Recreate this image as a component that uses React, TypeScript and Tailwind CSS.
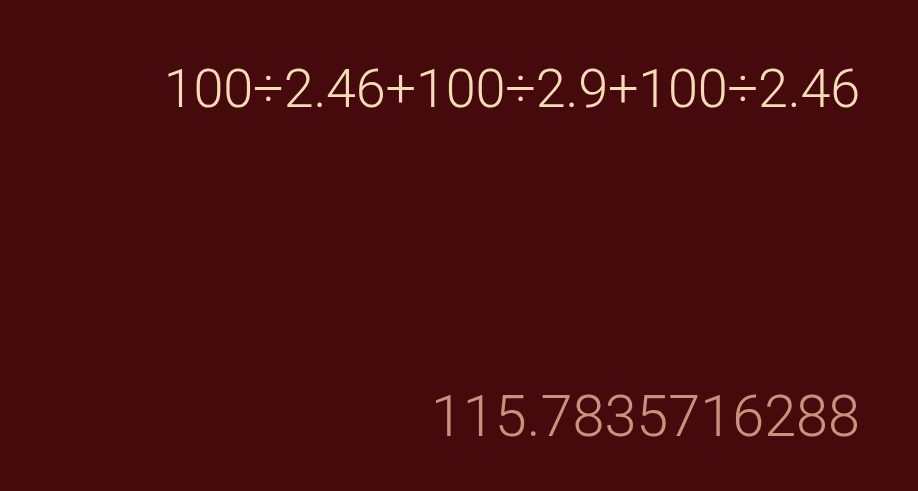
const App = () => {
  return (
    <div
      className="flex h-[491px] w-[918px] flex-col items-end bg-[#470a0c] pr-[58px]"
      style={{ fontFamily: "Roboto, 'Noto Sans', sans-serif" }}
    >
      <div className="mt-[53px] text-[54px] leading-[72px] font-light tracking-[-0.2px] text-[#f6dcb6]">
        100÷2.46+100÷2.9+100÷2.46
      </div>
      <div className="mt-auto mb-[38px] text-[57.6px] leading-[72px] font-light text-[#c9927c]">
        115.7835716288
      </div>
    </div>
  )
}

export default App
